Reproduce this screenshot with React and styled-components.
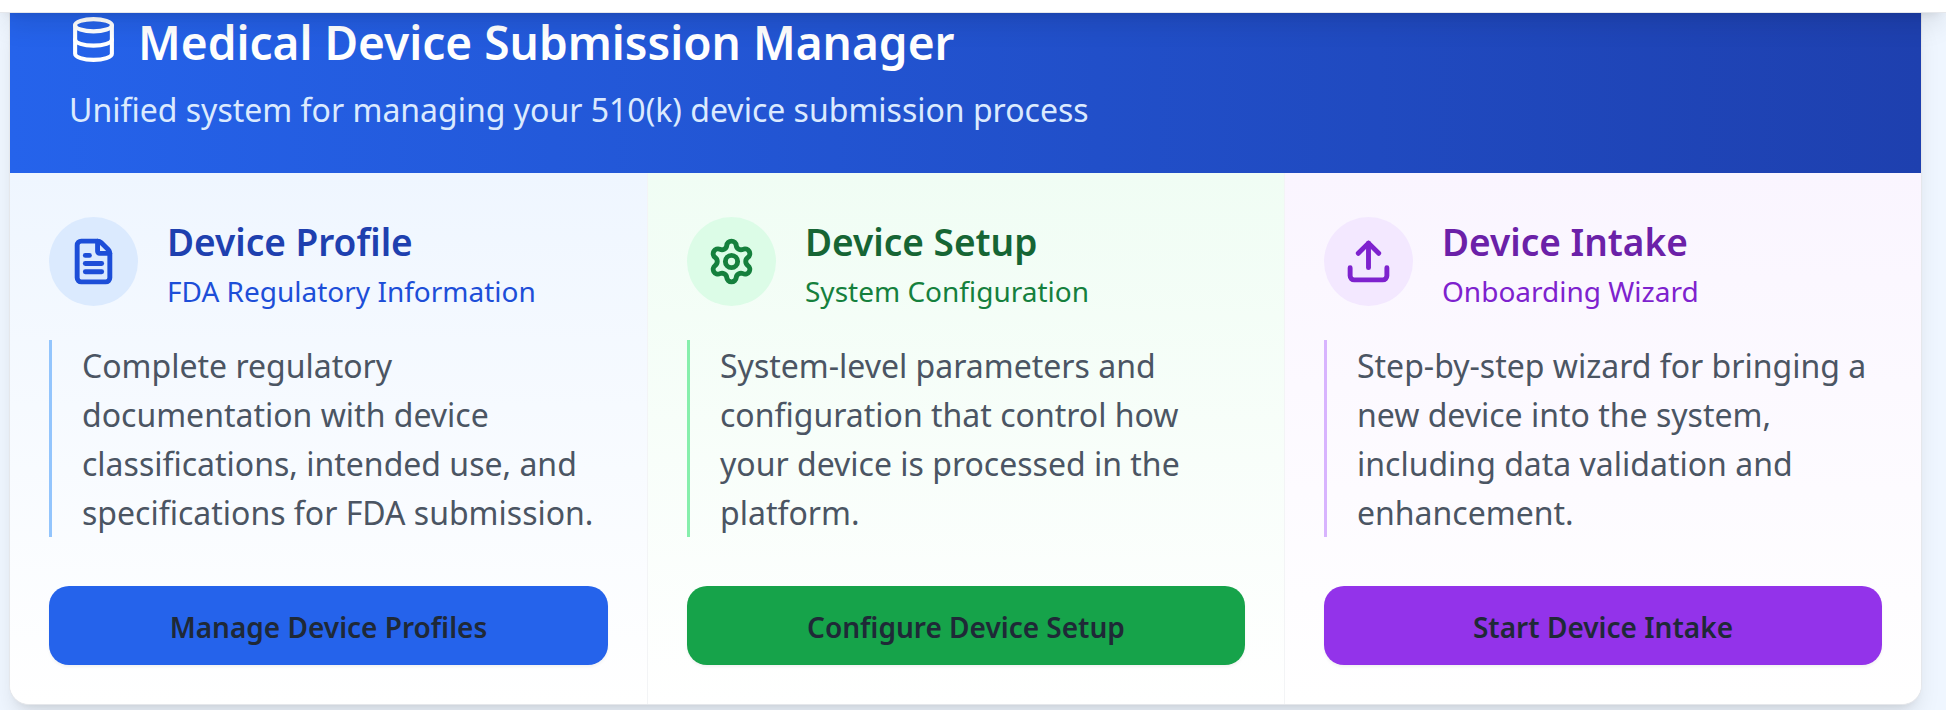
import React from "react";
import styled, { createGlobalStyle } from "styled-components";
import { Database, FileText, Settings, Upload } from "lucide-react";

const GlobalStyle = createGlobalStyle`
  *, *::before, *::after { box-sizing: border-box; }
  body {
    margin: 0;
    background: #eff6ff;
    font-family: "Segoe UI", "Noto Sans", "Open Sans", sans-serif;
    color: #1f2937;
  }
  h1, h2, p { margin: 0; }
`;

const themes = {
  blue: { tint: "#eff6ff", badge: "#dbeafe", rule: "#93c5fd", solid: "#2563eb", text: "#1d4ed8", title: "#1e40af" },
  green: { tint: "#f0fdf4", badge: "#dcfce7", rule: "#86efac", solid: "#16a34a", text: "#15803d", title: "#166534" },
  purple: { tint: "#faf5ff", badge: "#f3e8ff", rule: "#d8b4fe", solid: "#9333ea", text: "#7e22ce", title: "#6b21a8" },
};

const liftedShadow = "0 16px 25px -5px rgba(0, 0, 0, 0.1), 0 7px 10px -7px rgba(0, 0, 0, 0.1)";

/* Navigation bar, mostly scrolled out above the page's top edge. */
const TopBar = styled.div`
  position: relative;
  z-index: 1;
  height: 93px;
  margin-top: -80px;
  background: #ffffff;
  border-bottom: 1px solid #e5e7eb;
  box-shadow: ${liftedShadow};
`;

const Page = styled.main`
  padding: 0 24px 5px 9px;
`;

const Card = styled.section`
  overflow: hidden;
  background: #ffffff;
  border: 1px solid #e5e7eb;
  border-top: 0;
  border-radius: 0 0 20px 20px;
  box-shadow: ${liftedShadow};
`;

const Hero = styled.header`
  display: flex;
  flex-direction: column;
  gap: 16px;
  padding: 0 59px 40px;
  background: linear-gradient(to right, #2563eb, #1e40af);
`;

const HeroTitle = styled.h1`
  display: flex;
  align-items: flex-start;
  gap: 20px;
  color: #ffffff;
  font-size: 46px;
  font-weight: 600;
  line-height: 58px;

  svg { margin-top: 2px; }
`;

const HeroText = styled.p`
  color: #dbeafe;
  font-size: 32px;
  line-height: 46px;
`;

const Columns = styled.div`
  display: grid;
  grid-template-columns: repeat(3, minmax(0, 1fr));
`;

const Panel = styled.article`
  display: flex;
  flex-direction: column;
  padding: 39px;
  background: linear-gradient(to bottom, ${({ $theme }) => $theme.tint}, #ffffff);

  & + & { border-left: 1px solid #f3f4f6; }
`;

const PanelHead = styled.div`
  display: flex;
  align-items: center;
  gap: 29px;
  margin-bottom: 29px;
`;

const Badge = styled.span`
  display: flex;
  flex: none;
  align-items: center;
  justify-content: center;
  width: 89px;
  height: 89px;
  border-radius: 50%;
  background: ${({ $theme }) => $theme.badge};
  color: ${({ $theme }) => $theme.text};
`;

const PanelTitle = styled.h2`
  color: ${({ $theme }) => $theme.title};
  font-size: 37px;
  font-weight: 600;
  line-height: 60px;
`;

const PanelSubtitle = styled.p`
  color: ${({ $theme }) => $theme.text};
  font-size: 28px;
  line-height: 39px;
`;

const Description = styled.p`
  flex: 1;
  margin-bottom: 49px;
  padding: 1px 0 0 30px;
  border-left: 3px solid ${({ $theme }) => $theme.rule};
  color: #4b5563;
  font-size: 32px;
  line-height: 49px;
`;

const ActionButton = styled.button`
  height: 79px;
  padding: 2px 20px 0;
  border: 0;
  border-radius: 20px;
  background: ${({ $theme }) => $theme.solid};
  box-shadow: 0 2px 3px rgba(0, 0, 0, 0.05);
  color: #1f2937;
  font-family: inherit;
  font-size: 28px;
  font-weight: 600;
  line-height: 40px;
  cursor: pointer;
`;

const panels = [
  {
    theme: themes.blue,
    Icon: FileText,
    title: "Device Profile",
    subtitle: "FDA Regulatory Information",
    text: "Complete regulatory documentation with device classifications, intended use, and specifications for FDA submission.",
    action: "Manage Device Profiles",
  },
  {
    theme: themes.green,
    Icon: Settings,
    title: "Device Setup",
    subtitle: "System Configuration",
    text: "System-level parameters and configuration that control how your device is processed in the platform.",
    action: "Configure Device Setup",
  },
  {
    theme: themes.purple,
    Icon: Upload,
    title: "Device Intake",
    subtitle: "Onboarding Wizard",
    text: "Step-by-step wizard for bringing a new device into the system, including data validation and enhancement.",
    action: "Start Device Intake",
  },
];

export default function App() {
  return (
    <>
      <GlobalStyle />
      <TopBar />
      <Page>
        <Card>
          <Hero>
            <HeroTitle>
              <Database size={49} aria-hidden="true" />
              Medical Device Submission Manager
            </HeroTitle>
            <HeroText>Unified system for managing your 510(k) device submission process</HeroText>
          </Hero>
          <Columns>
            {panels.map(({ theme, Icon, title, subtitle, text, action }) => (
              <Panel key={title} $theme={theme}>
                <PanelHead>
                  <Badge $theme={theme}>
                    <Icon size={49} strokeWidth={2.4} aria-hidden="true" />
                  </Badge>
                  <div>
                    <PanelTitle $theme={theme}>{title}</PanelTitle>
                    <PanelSubtitle $theme={theme}>{subtitle}</PanelSubtitle>
                  </div>
                </PanelHead>
                <Description $theme={theme}>{text}</Description>
                <ActionButton type="button" $theme={theme}>{action}</ActionButton>
              </Panel>
            ))}
          </Columns>
        </Card>
      </Page>
    </>
  );
}
